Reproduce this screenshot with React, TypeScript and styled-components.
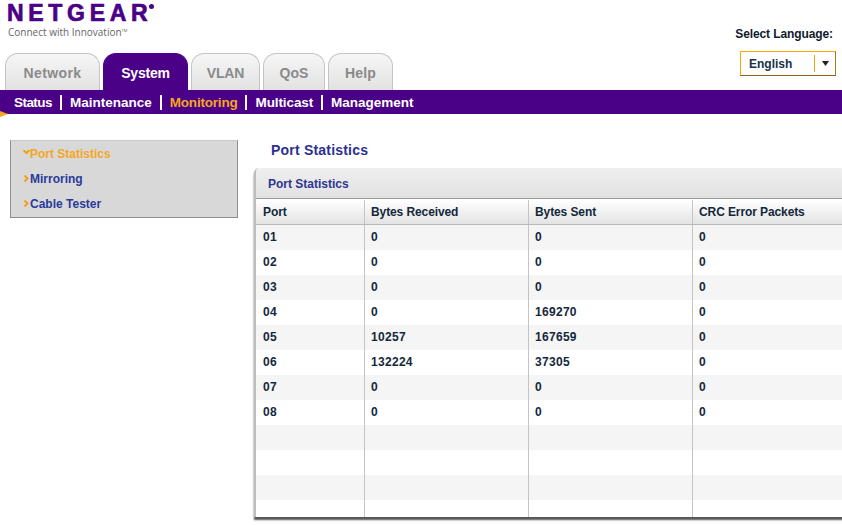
import * as React from "react"
import styled, { createGlobalStyle } from "styled-components"

const GlobalStyle = createGlobalStyle`
  html, body {
    margin: 0;
    padding: 0;
    background: #fff;
    overflow: hidden;
    font-family: "Liberation Sans", Arial, sans-serif;
  }
`

const Page = styled.div`
  width: 842px;
  height: 525px;
  overflow: hidden;
`
const Header = styled.div`
  display: flex;
  justify-content: space-between;
  height: 90px;
`
const LeftHeader = styled.div`
  display: flex;
  flex-direction: column;
  justify-content: space-between;
`
const Logo = styled.div`
  padding: 1px 0 0 7px;
  color: #4a0087;
`
const LogoWord = styled.div`
  position: relative;
  width: 147px;
  font-size: 23px;
  line-height: 24px;
  font-weight: bold;
  letter-spacing: 4.7px;
  -webkit-text-stroke: 0.7px #4a0087;
  &::after {
    content: "";
    position: absolute;
    right: 0;
    top: 3px;
    width: 5px;
    height: 5px;
    border-radius: 50%;
    background: #4a0087;
  }
`
const Tagline = styled.div`
  margin: 1px 0 0 1px;
  font-family: "Open Sans", "Liberation Sans", sans-serif;
  font-size: 10px;
  line-height: 13px;
  color: #666;
  sup {
    font-size: 4px;
    line-height: 5px;
    vertical-align: 4px;
  }
`
const Tabs = styled.div`
  display: flex;
  gap: 3px;
  padding-left: 5px;
`
const Tab = styled.div<{ $active?: boolean; $width: number; $tracking: number }>`
  width: ${(p) => p.$width}px;
  height: 37px;
  box-sizing: border-box;
  display: flex;
  align-items: center;
  justify-content: center;
  padding-top: 1px;
  border: 1px solid ${(p) => (p.$active ? "#4a0087" : "#c4c4c4")};
  border-bottom: 0;
  border-radius: 13px 13px 0 0;
  background: ${(p) => (p.$active ? "#4a0087" : "linear-gradient(#f6f6f6, #e2e2e2)")};
  color: ${(p) => (p.$active ? "#fff" : "#8a8a8a")};
  font-size: 14px;
  font-weight: bold;
  letter-spacing: ${(p) => p.$tracking}px;
`
const LanguageBox = styled.div`
  display: flex;
  flex-direction: column;
  align-items: flex-end;
  padding: 27px 6px 0 0;
`
const LanguageLabel = styled.div`
  margin-right: 3px;
  font-size: 12px;
  line-height: 14px;
  font-weight: bold;
  letter-spacing: -0.1px;
  color: #0f1a2c;
`
const LanguageSelect = styled.div`
  display: flex;
  align-items: center;
  width: 96px;
  height: 25px;
  margin-top: 10px;
  box-sizing: border-box;
  border: 1px solid #f5a800;
  border-bottom-color: #8a6414;
  border-right-color: #a87c10;
  font-size: 12px;
  font-weight: bold;
  color: #16324a;
`
const LanguageValue = styled.div`
  flex: 1;
  padding-left: 8px;
`
const LanguageArrow = styled.div`
  display: flex;
  justify-content: center;
  width: 20px;
  height: 17px;
  align-items: center;
  border-left: 1px solid #f5a800;
  svg {
    display: block;
  }
`
const SubNav = styled.div`
  position: relative;
  display: flex;
  align-items: center;
  height: 24px;
  padding-left: 14px;
  background: #4a0087;
`
const SubNavItem = styled.div<{ $active?: boolean; $tracking: number }>`
  font-size: 13.5px;
  font-weight: bold;
  letter-spacing: ${(p) => p.$tracking}px;
  color: ${(p) => (p.$active ? "#f5a623" : "#fff")};
`
const SubNavBar = styled.div`
  width: 2px;
  height: 15px;
  margin: 0 8px;
  background: #fff;
`
const NavCorner = styled.div`
  position: absolute;
  left: 0;
  top: 21px;
  width: 0;
  height: 0;
  border-left: 8px solid #f5a623;
  border-top: 3px solid transparent;
  border-bottom: 3px solid transparent;
`
const Body = styled.div`
  display: flex;
  padding: 26px 0 0 10px;
`
const Sidebar = styled.div`
  flex: none;
  width: 228px;
  height: 78px;
  box-sizing: border-box;
  border: 1px solid #8e8e8e;
  border-top-color: #c8c8c8;
  background: #d8d8d8;
`
const SideItem = styled.div<{ $active?: boolean }>`
  display: flex;
  align-items: center;
  height: 25px;
  padding-left: 12px;
  font-size: 12px;
  font-weight: bold;
  color: ${(p) => (p.$active ? "#f5a623" : "#2b3a9a")};
`
const SideMark = styled.svg`
  flex: none;
  width: 7px;
  height: 7px;
`
const Content = styled.div`
  flex: none;
  width: 640px;
  margin-left: 16px;
`
const Title = styled.h1`
  margin: 0 0 0 17px;
  height: 28px;
  font-size: 14px;
  line-height: 20px;
  font-weight: bold;
  letter-spacing: 0.2px;
  color: #2b2f92;
`
const Panel = styled.div`
  box-sizing: border-box;
  border-left: 2px solid #bdbdbd;
  box-shadow: 0 3px 2px #555;
  border-radius: 5px 0 0 0;
  background: #fff;
`
const PanelHead = styled.div`
  height: 31px;
  box-sizing: border-box;
  padding: 2px 0 0 12px;
  display: flex;
  align-items: center;
  background: linear-gradient(#efefef, #e2e2e2);
  border-bottom: 1px solid #999;
  font-size: 12px;
  font-weight: bold;
  color: #2e3592;
  border-radius: 5px 0 0 0;
`
const StatsTable = styled.table`
  width: 638px;
  table-layout: fixed;
  border-collapse: separate;
  border-spacing: 0;
  margin-top: 1px;
`
const HeadCell = styled.th<{ $width: number }>`
  width: ${(p) => p.$width}px;
  height: 25px;
  box-sizing: border-box;
  padding: 0 0 0 6px;
  text-align: left;
  font-size: 12px;
  font-weight: bold;
  letter-spacing: -0.1px;
  color: #14283c;
  background: linear-gradient(#fff, #e3e3e3);
  border-bottom: 1px solid #b8b8b8;
  border-right: 1px solid #c4c4c4;
  &:first-child {
    padding-left: 7px;
  }
  &:last-child {
    border-right: 0;
  }
`
const Row = styled.tr<{ $odd: boolean }>`
  background: ${(p) => (p.$odd ? "#f5f5f5" : "#fff")};
`
const Cell = styled.td`
  height: 25px;
  box-sizing: border-box;
  padding: 0 0 2px 6px;
  font-size: 12px;
  font-weight: bold;
  letter-spacing: 0.3px;
  color: #14283c;
  border-right: 1px solid #c4c4c4;
  &:first-child {
    padding-left: 7px;
  }
  &:last-child {
    border-right: 0;
  }
`
const ShortRow = styled.tr`
  background: #fff;
`
const ShortCell = styled(Cell)`
  height: 17px;
`

const tabs = [
  { name: "Network", width: 95, tracking: 0.4 },
  { name: "System", width: 85, tracking: -0.2, active: true },
  { name: "VLAN", width: 69, tracking: -0.2 },
  { name: "QoS", width: 62, tracking: 0 },
  { name: "Help", width: 65, tracking: 0.2 },
]

const subNav = [
  { name: "Status", tracking: -0.55 },
  { name: "Maintenance", tracking: 0 },
  { name: "Monitoring", tracking: -0.2, active: true },
  { name: "Multicast", tracking: -0.1 },
  { name: "Management", tracking: 0 },
]

const stats = [
  ["01", "0", "0", "0"],
  ["02", "0", "0", "0"],
  ["03", "0", "0", "0"],
  ["04", "0", "169270", "0"],
  ["05", "10257", "167659", "0"],
  ["06", "132224", "37305", "0"],
  ["07", "0", "0", "0"],
  ["08", "0", "0", "0"],
  ["", "", "", ""],
  ["", "", "", ""],
  ["", "", "", ""],
]

function SideIcon({ open }: { open?: boolean }) {
  return (
    <SideMark viewBox="0 0 7 7">
      {open ? (
        <path d="M0.5 0 L3.5 3 L6.5 0" fill="none" stroke="#f5a012" strokeWidth="2" />
      ) : (
        <path d="M1.5 0.5 L4.5 3.5 L1.5 6.5" fill="none" stroke="#f5a012" strokeWidth="2" />
      )}
    </SideMark>
  )
}

export default function App() {
  return (
    <Page>
      <GlobalStyle />
      <Header>
        <LeftHeader>
          <Logo>
            <LogoWord>NETGEAR</LogoWord>
            <Tagline>
              Connect with Innovation<sup>TM</sup>
            </Tagline>
          </Logo>
          <Tabs>
            {tabs.map((tab) => (
              <Tab key={tab.name} $active={tab.active} $width={tab.width} $tracking={tab.tracking}>
                {tab.name}
              </Tab>
            ))}
          </Tabs>
        </LeftHeader>
        <LanguageBox>
          <LanguageLabel>Select Language:</LanguageLabel>
          <LanguageSelect>
            <LanguageValue>English</LanguageValue>
            <LanguageArrow>
              <svg width="7" height="5" viewBox="0 0 7 5">
                <path d="M0 0 H7 L3.5 5 Z" fill="#222" />
              </svg>
            </LanguageArrow>
          </LanguageSelect>
        </LanguageBox>
      </Header>
      <SubNav>
        {subNav.map((item, index) => (
          <React.Fragment key={item.name}>
            {index > 0 && <SubNavBar />}
            <SubNavItem $active={item.active} $tracking={item.tracking}>
              {item.name}
            </SubNavItem>
          </React.Fragment>
        ))}
        <NavCorner />
      </SubNav>
      <Body>
        <Sidebar>
          <SideItem $active>
            <SideIcon open />
            Port Statistics
          </SideItem>
          <SideItem>
            <SideIcon />
            Mirroring
          </SideItem>
          <SideItem>
            <SideIcon />
            Cable Tester
          </SideItem>
        </Sidebar>
        <Content>
          <Title>Port Statistics</Title>
          <Panel>
            <PanelHead>Port Statistics</PanelHead>
            <StatsTable>
              <thead>
                <tr>
                  <HeadCell $width={109}>Port</HeadCell>
                  <HeadCell $width={164}>Bytes Received</HeadCell>
                  <HeadCell $width={164}>Bytes Sent</HeadCell>
                  <HeadCell $width={201}>CRC Error Packets</HeadCell>
                </tr>
              </thead>
              <tbody>
                {stats.map((row, index) => (
                  <Row key={index} $odd={index % 2 === 0}>
                    {row.map((value, col) => (
                      <Cell key={col}>{value}</Cell>
                    ))}
                  </Row>
                ))}
                <ShortRow>
                  <ShortCell />
                  <ShortCell />
                  <ShortCell />
                  <ShortCell />
                </ShortRow>
              </tbody>
            </StatsTable>
          </Panel>
        </Content>
      </Body>
    </Page>
  )
}
